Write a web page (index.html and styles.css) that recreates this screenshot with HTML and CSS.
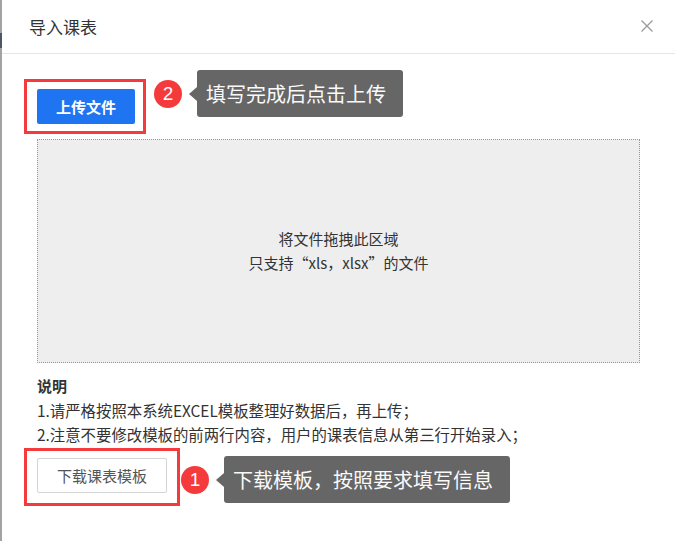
FILE: index.html
```html
<!DOCTYPE html>
<html lang="zh-CN">
<head>
<meta charset="utf-8">
<title>导入课表</title>
<link rel="stylesheet" href="styles.css">
</head>
<body>
<div class="dialog">
  <span class="edge-mark"></span>
  <header class="dlg-header">
    <h1 class="dlg-title">导入课表</h1>
    <button class="dlg-close" aria-label="关闭">
      <svg width="12" height="12" viewBox="0 0 12 12"><path d="M0.5 0.5L11.5 11.5M11.5 0.5L0.5 11.5" stroke="#9a9a9a" stroke-width="1.3" fill="none"/></svg>
    </button>
  </header>
  <main class="dlg-body">
    <div class="mark mark-upload">
      <button class="btn btn-primary">上传文件</button>
      <div class="callout callout-upload">
        <span class="badge">2</span>
        <span class="tip">填写完成后点击上传</span>
      </div>
    </div>
    <div class="dropzone">
      <p>将文件拖拽此区域</p>
      <p>只支持“xls，xlsx”的文件</p>
    </div>
    <section class="notes">
      <h2 class="notes-title">说明</h2>
      <p>1.请严格按照本系统EXCEL模板整理好数据后，再上传；</p>
      <p>2.注意不要修改模板的前两行内容，用户的课表信息从第三行开始录入；</p>
    </section>
    <div class="mark mark-download">
      <button class="btn btn-default">下载课表模板</button>
      <div class="callout callout-download">
        <span class="badge">1</span>
        <span class="tip">下载模板，按照要求填写信息</span>
      </div>
    </div>
  </main>
</div>
</body>
</html>
```
FILE: styles.css
```css
* { box-sizing: border-box; }
html, body { margin: 0; padding: 0; background: #fff; }
body {
  font-family: "Noto Sans CJK SC", "Noto Sans", sans-serif;
  color: #333;
}
.dialog {
  position: relative;
  width: 676px;
  height: 541px;
  border-left: 2px solid #a3a3a3;
  background: #fff;
}
.edge-mark {
  position: absolute;
  left: -2px;
  top: 33px;
  width: 2px;
  height: 15px;
  background: #4d5566;
}
.dlg-header {
  height: 54px;
  border-bottom: 1px solid #e6e6e6;
  display: flex;
  align-items: center;
  justify-content: space-between;
  padding: 0 22px 0 27px;
  margin-right: 1px;
}
.dlg-title {
  margin: 0;
  font-size: 17px;
  font-weight: normal;
  color: #333;
  line-height: 1;
  padding-bottom: 1px;
}
.dlg-close {
  border: 0;
  background: none;
  padding: 0;
  width: 12px;
  height: 12px;
  display: flex;
  margin-bottom: 1px;
}
.dlg-body {
  padding: 25px 36px 0 35px;
}
.mark {
  position: relative;
  border: 3px solid #f43a3a;
  margin-left: -13px;
}
.mark-upload {
  width: 122px;
  height: 55px;
  padding: 7px 0 0 10px;
}
.mark-download {
  width: 156px;
  height: 58px;
  padding: 7px 0 0 10px;
  margin-top: 2px;
}
.btn {
  font-family: inherit;
  display: flex;
  align-items: center;
  justify-content: center;
  height: 35px;
  border-radius: 2px;
  font-size: 15px;
  cursor: pointer;
}
.btn-primary {
  width: 98px;
  border: 0;
  background: #1f74f2;
  color: #fff;
  font-weight: bold;
}
.btn-default {
  width: 130px;
  border: 1px solid #d4d4d4;
  background: #fff;
  color: #555;
}
.callout {
  position: absolute;
  display: flex;
  align-items: center;
}
.callout-upload { left: 127px; top: -12px; }
.callout-download { left: 154px; top: 5px; }
.badge {
  width: 28px;
  height: 28px;
  border-radius: 50%;
  background: #f43a3a;
  color: #fff;
  font-family: "Liberation Sans", Arial, sans-serif;
  font-size: 19px;
  display: flex;
  align-items: center;
  justify-content: center;
  margin-right: 15px;
}
.tip {
  position: relative;
  height: 47px;
  display: flex;
  align-items: center;
  background: #666;
  color: #fafafa;
  font-size: 20px;
  padding: 0 17px 0 9px;
  border-radius: 3px;
  white-space: nowrap;
}
.tip::before {
  content: "";
  position: absolute;
  left: -8px;
  top: 50%;
  margin-top: -7px;
  border-style: solid;
  border-width: 7px 8px 7px 0;
  border-color: transparent #666 transparent transparent;
}
.dropzone {
  margin-top: 5px;
  height: 224px;
  background: #eeeeee;
  border: 1px dotted #999;
  display: flex;
  flex-direction: column;
  align-items: center;
  justify-content: center;
  font-size: 15px;
  line-height: 24px;
  color: #333;
}
.dropzone p { margin: 0; }
.notes {
  margin-top: 11px;
  font-size: 15.4px;
  line-height: 24px;
  color: #333;
}
.notes-title {
  margin: 0;
  font-size: 15px;
  font-weight: bold;
}
.notes p { margin: 0; }
```
